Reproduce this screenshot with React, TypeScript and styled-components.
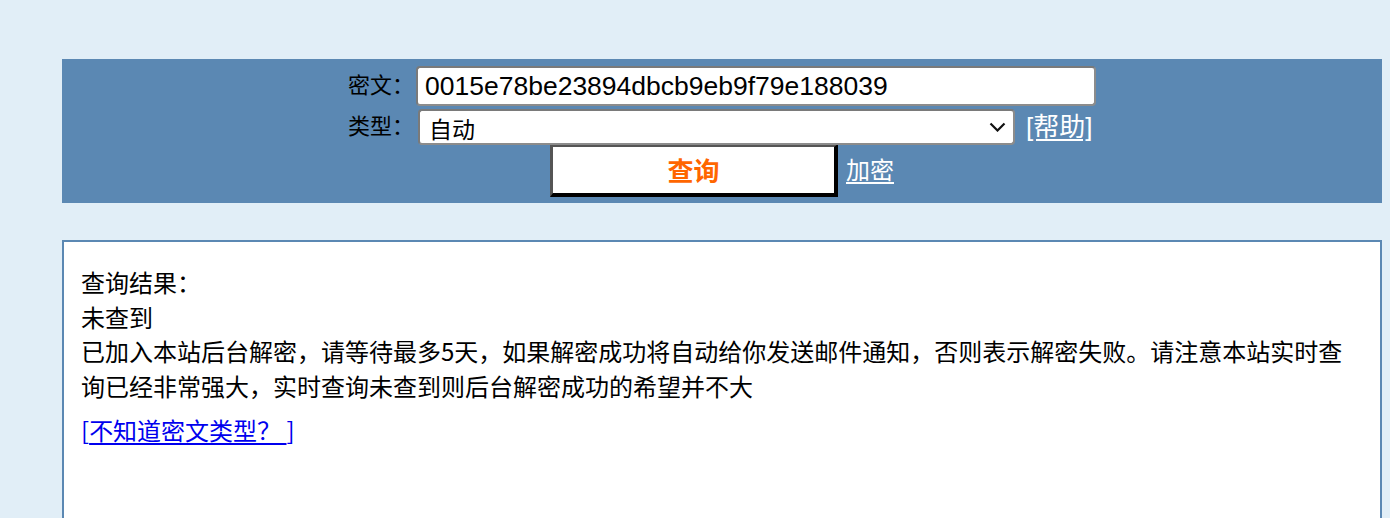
import React from "react";
import styled, { createGlobalStyle } from "styled-components";

const GlobalStyle = createGlobalStyle`
  html, body {
    margin: 0;
    padding: 0;
    background: #e1eef7;
  }
  body {
    font-family: "Liberation Sans", "Noto Sans CJK SC", sans-serif;
    color: #000;
  }
`;

const Page = styled.div`
  padding: 59px 8px 0 62px;
  height: 518px;
  box-sizing: border-box;
  overflow: hidden;
`;

const SearchPanel = styled.form`
  background: #5b88b3;
  padding: 7px 0 6px;
  display: grid;
  grid-template-columns: 66px 680px;
  justify-content: center;
  column-gap: 2px;
  row-gap: 3px;
  align-items: center;
`;

const Label = styled.label`
  font-size: 22px;
  line-height: 1;
  text-align: right;
  white-space: nowrap;
  color: #000;
`;

const TextField = styled.input`
  box-sizing: border-box;
  height: 40px;
  width: 680px;
  border: 2px solid #7a7a7a;
  border-bottom-color: #8c8c8c;
  border-right-color: #8c8c8c;
  border-radius: 4px;
  padding: 0 7px;
  font-family: "Liberation Sans", Arial, sans-serif;
  font-size: 26.5px;
  color: #000;
  background: #fff;
  outline: none;
`;

const TypeRow = styled.div`
  display: flex;
  align-items: center;
  gap: 11px;
  padding-left: 2px;
`;

const SelectWrap = styled.div`
  position: relative;
  width: 597px;
  height: 36px;
`;

const TypeSelect = styled.select`
  appearance: none;
  -webkit-appearance: none;
  box-sizing: border-box;
  width: 100%;
  height: 100%;
  border: 2px solid #7a7a7a;
  border-bottom-color: #8c8c8c;
  border-right-color: #8c8c8c;
  border-radius: 4px;
  padding: 0 30px 0 9px;
  background: #fff;
  font-family: "Noto Sans CJK SC", "Liberation Sans", sans-serif;
  font-size: 23px;
  color: #000;
  outline: none;
`;

const Chevron = styled.svg`
  position: absolute;
  right: 9px;
  top: 13px;
  pointer-events: none;
`;

const PanelLink = styled.a<{ $size: number }>`
  color: #fff;
  font-size: ${(p) => p.$size}px;
  line-height: 1;
  text-decoration: underline;
  text-underline-offset: 3px;
  white-space: nowrap;
  cursor: pointer;
`;

const ActionRow = styled.div`
  grid-column: 1 / -1;
  justify-self: center;
  display: flex;
  align-items: center;
  gap: 8px;
  margin-top: -4px;
`;

const QueryButton = styled.button`
  box-sizing: border-box;
  width: 288px;
  height: 53px;
  background: #fff;
  border-style: solid;
  border-width: 3px 4px 4px 3px;
  border-color: #555 #000 #000 #555;
  color: #ff6600;
  font-family: "Noto Sans CJK SC", sans-serif;
  font-weight: bold;
  font-size: 26px;
  line-height: 1;
  padding: 0;
  cursor: pointer;
`;

const ResultBox = styled.div`
  margin-top: 37px;
  border: 2px solid #5b88b3;
  background: #fff;
  padding: 23px 30px 80px 17px;
  font-family: "Noto Sans CJK SC", "Liberation Sans", sans-serif;
  font-size: 24px;
  line-height: 34.5px;
  color: #000;
`;

const Line = styled.div``;

const HelpLink = styled.a`
  display: inline-block;
  margin-top: 10px;
  color: #0000ee;
  cursor: pointer;
  span {
    text-decoration: underline;
    text-underline-offset: 3px;
  }
`;

export default function App() {
  return (
    <>
      <GlobalStyle />
      <Page>
        <SearchPanel onSubmit={(e) => e.preventDefault()}>
          <Label htmlFor="ciphertext">密文：</Label>
          <TextField id="ciphertext" defaultValue="0015e78be23894dbcb9eb9f79e188039" />
          <Label htmlFor="hashtype">类型：</Label>
          <TypeRow>
            <SelectWrap>
              <TypeSelect id="hashtype" defaultValue="auto">
                <option value="auto">自动</option>
                <option value="md5">md5</option>
                <option value="sha1">sha1</option>
              </TypeSelect>
              <Chevron width="17" height="10" viewBox="0 0 17 10">
                <path d="M1.5 1.5 L8.5 8.5 L15.5 1.5" fill="none" stroke="#111" strokeWidth="2.2" />
              </Chevron>
            </SelectWrap>
            <PanelLink $size={26}>[帮助]</PanelLink>
          </TypeRow>
          <ActionRow>
            <QueryButton type="submit">查询</QueryButton>
            <PanelLink $size={24}>加密</PanelLink>
          </ActionRow>
        </SearchPanel>
        <ResultBox>
          <Line>查询结果：</Line>
          <Line>未查到</Line>
          <Line>
            已加入本站后台解密，请等待最多5天，如果解密成功将自动给你发送邮件通知，否则表示解密失败。请注意本站实时查询已经非常强大，实时查询未查到则后台解密成功的希望并不大
          </Line>
          <HelpLink>
            [<span>不知道密文类型？ </span>]
          </HelpLink>
        </ResultBox>
      </Page>
    </>
  );
}
